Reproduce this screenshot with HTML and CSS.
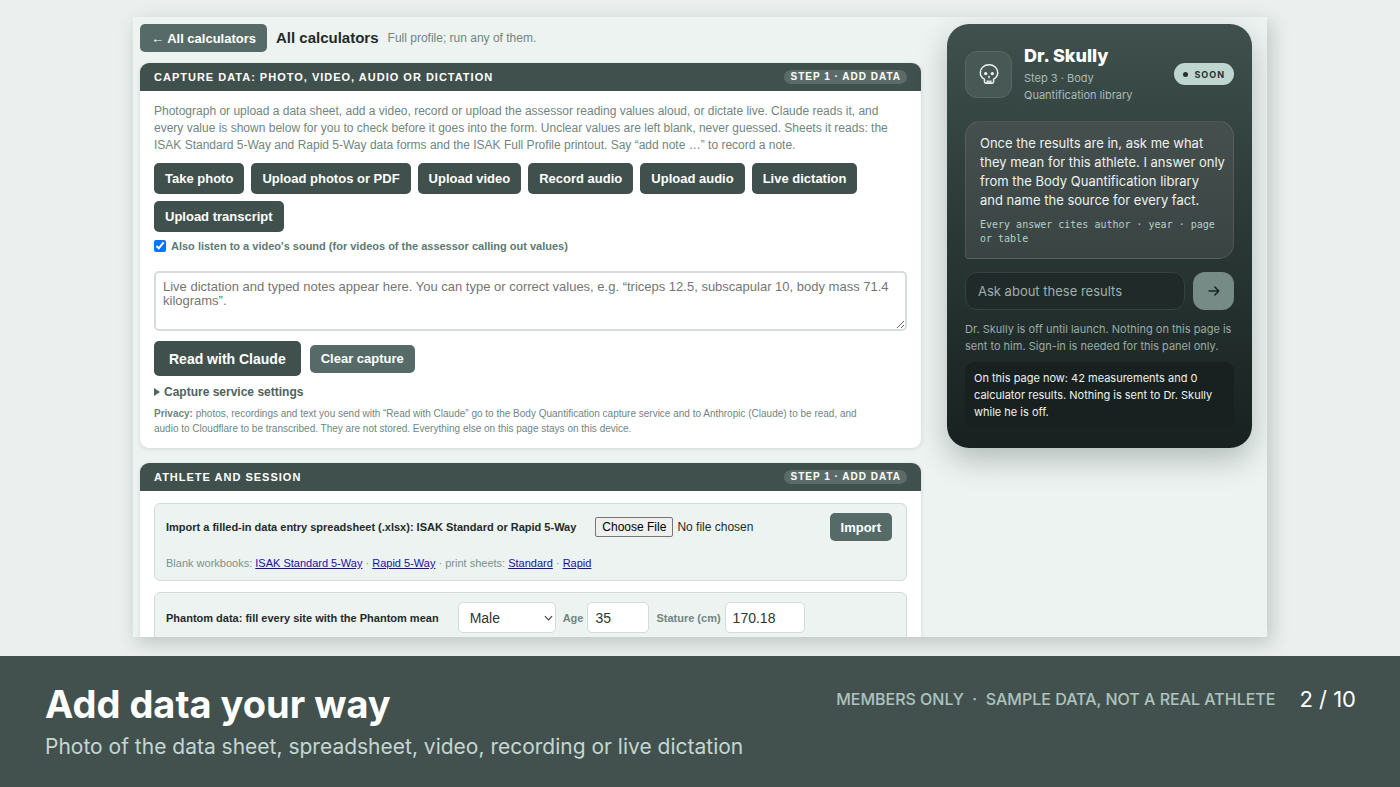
FILE: index.html
```html
<!DOCTYPE html>
<html lang="en">
<head>
  <meta charset="UTF-8">
  <title>Add data your way</title>
  <meta name="viewport" content="width=device-width, initial-scale=1.0">
  <link rel="stylesheet" href="styles.css">
</head>
<body>
  <div class="stage">
    <div class="shot">
      <main class="main">
        <div class="topbar">
          <button type="button" class="btn btn-soft">← All calculators</button>
          <h1>All calculators</h1>
          <span class="topbar-note">Full profile; run any of them.</span>
        </div>

        <section class="card">
          <div class="card-head">
            <h2>Capture data: photo, video, audio or dictation</h2>
            <span class="step">Step 1 · Add data</span>
          </div>
          <div class="card-body">
            <p class="intro">Photograph or upload a data sheet, add a video, record or upload the assessor reading values aloud, or dictate live. Claude reads it, and every value is shown below for you to check before it goes into the form. Unclear values are left blank, never guessed. Sheets it reads: the ISAK Standard 5-Way and Rapid 5-Way data forms and the ISAK Full Profile printout. Say “add note …” to record a note.</p>
            <div class="btn-row">
              <button type="button" class="btn">Take photo</button>
              <button type="button" class="btn">Upload photos or PDF</button>
              <button type="button" class="btn">Upload video</button>
              <button type="button" class="btn">Record audio</button>
              <button type="button" class="btn">Upload audio</button>
              <button type="button" class="btn">Live dictation</button>
              <button type="button" class="btn">Upload transcript</button>
            </div>
            <label class="check"><input type="checkbox" checked> Also listen to a video's sound (for videos of the assessor calling out values)</label>
            <textarea class="notes" aria-label="Dictation and notes" placeholder="Live dictation and typed notes appear here. You can type or correct values, e.g. “triceps 12.5, subscapular 10, body mass 71.4 kilograms”."></textarea>
            <div class="actions">
              <button type="button" class="btn btn-big">Read with Claude</button>
              <button type="button" class="btn btn-soft">Clear capture</button>
            </div>
            <details class="settings">
              <summary>Capture service settings</summary>
            </details>
            <p class="privacy"><b>Privacy:</b> photos, recordings and text you send with “Read with Claude” go to the Body Quantification capture service and to Anthropic (Claude) to be read, and<br>audio to Cloudflare to be transcribed. They are not stored. Everything else on this page stays on this device.</p>
          </div>
        </section>

        <section class="card">
          <div class="card-head">
            <h2>Athlete and session</h2>
            <span class="step">Step 1 · Add data</span>
          </div>
          <div class="card-body">
            <div class="box">
              <div class="box-row">
                <label class="box-title" for="xlsx">Import a filled-in data entry spreadsheet (.xlsx): ISAK Standard or Rapid 5-Way</label>
                <input type="file" id="xlsx" class="file">
                <button type="button" class="btn btn-soft">Import</button>
              </div>
              <p class="links">Blank workbooks: <a href="#">ISAK Standard 5-Way</a> · <a href="#">Rapid 5-Way</a> · print sheets: <a href="#">Standard</a> · <a href="#">Rapid</a></p>
            </div>
            <div class="box">
              <div class="box-row">
                <label class="box-title" for="sex">Phantom data: fill every site with the Phantom mean</label>
                <span class="select">
                  <select id="sex">
                    <option>Male</option>
                    <option>Female</option>
                  </select>
                  <svg viewBox="0 0 10 6" aria-hidden="true"><path d="M1 1l4 4 4-4"/></svg>
                </span>
                <label class="field">Age <input type="text" class="age" value="35"></label>
                <label class="field">Stature (cm) <input type="text" class="stature" value="170.18"></label>
              </div>
            </div>
          </div>
        </section>
      </main>

      <aside class="skully">
        <div class="skully-head">
          <div class="avatar">
            <svg viewBox="0 0 24 24" aria-hidden="true">
              <path d="M7 17.500C4.500 16.200 2.500 13.800 2.500 10.500 2.500 5.500 6.700 2 12 2s9.500 3.500 9.500 8.500c0 3.300-2 5.700-4.500 7v3c0 .9-.6 1.500-1.500 1.500h-7C7.600 22 7 21.400 7 20.500z"/>
              <path d="M10 19.500V22M12 19.500V22M14 19.500V22M12 14.500v1.500"/>
              <circle class="eye" cx="8.400" cy="11.500" r="1.800"/>
              <circle class="eye" cx="15.600" cy="11.500" r="1.800"/>
            </svg>
          </div>
          <div class="who">
            <h2>Dr. Skully</h2>
            <p>Step 3 · Body Quantification library</p>
          </div>
          <span class="soon">Soon</span>
        </div>
        <div class="bubble">
          <p>Once the results are in, ask me what<br>they mean for this athlete. I answer only<br>from the Body Quantification library<br>and name the source for every fact.</p>
          <p class="cite">Every answer cites author · year · page<br>or table</p>
        </div>
        <div class="ask">
          <input type="text" placeholder="Ask about these results" aria-label="Ask about these results">
          <button type="button" aria-label="Send">
            <svg viewBox="0 0 16 16" aria-hidden="true"><path d="M2.500 8h11M9 3.500L13.500 8 9 12.500"/></svg>
          </button>
        </div>
        <p class="off-note">Dr. Skully is off until launch. Nothing on this page is sent to him. Sign-in is needed for this panel only.</p>
        <p class="now">On this page now: 42 measurements and 0 calculator results. Nothing is sent to Dr. Skully while he is off.</p>
      </aside>
    </div>
  </div>

  <footer class="caption">
    <div>
      <p class="caption-title">Add data your way</p>
      <p class="caption-sub">Photo of the data sheet, spreadsheet, video, recording or live dictation</p>
    </div>
    <div class="caption-meta">
      <span class="members">MEMBERS ONLY &nbsp;·&nbsp; SAMPLE DATA, NOT A REAL ATHLETE</span>
      <span class="count">2 / 10</span>
    </div>
  </footer>
</body>
</html>
```
FILE: styles.css
```css
* {
  box-sizing: border-box;
}
body {
  margin: 0;
  height: 100vh;
  display: flex;
  flex-direction: column;
  background: #ebf0ee;
  font-family: "Liberation Sans", Arial, sans-serif;
  color: #1f2b29;
}
h1, h2, p {
  margin: 0;
}
button, input, select, textarea {
  font-family: inherit;
}

/* framed app */
.stage {
  flex: 1;
  min-height: 0;
  display: flex;
  justify-content: center;
  padding: 17px 0 19px;
  overflow: hidden;
}
.shot {
  width: 81%;
  display: flex;
  align-items: flex-start;
  gap: 26px;
  padding: 7px 15px 0 7px;
  background: #edf3f1;
  box-shadow: 4px 6px 18px rgba(40, 60, 55, 0.24);
  overflow: hidden;
}
.main {
  flex: 1;
  min-width: 0;
}
.topbar {
  display: flex;
  align-items: center;
  gap: 9px;
  margin-bottom: 11px;
}
.topbar h1 {
  font-size: 15px;
  line-height: 20px;
}
.topbar-note {
  font-size: 12px;
  color: #6f8681;
}

.btn {
  height: 31px;
  padding: 0 11px;
  border: 0;
  border-radius: 5px;
  background: #3f504d;
  color: #fff;
  font-size: 13px;
  font-weight: bold;
  white-space: nowrap;
  cursor: pointer;
}
.btn-soft {
  height: 28px;
  background: #566b67;
}
.btn-big {
  height: 35px;
  padding: 0 15px;
  font-size: 14px;
}

.card {
  margin-bottom: 15px;
  border-radius: 9px;
  background: #fff;
  box-shadow: 0 1px 4px rgba(40, 60, 55, 0.15);
  overflow: hidden;
}
.card-head {
  display: flex;
  align-items: center;
  justify-content: space-between;
  height: 28px;
  padding: 0 14px;
  background: #3f504d;
  color: #fff;
  text-transform: uppercase;
}
.card-head h2 {
  font-size: 11px;
  letter-spacing: 1px;
}
.step {
  padding: 0 6px;
  border-radius: 7px;
  background: #5b6b68;
  font-size: 10px;
  line-height: 14px;
  font-weight: bold;
  letter-spacing: 1px;
}
.card-body {
  padding: 12px 14px;
}
.intro {
  font-size: 12px;
  line-height: 17px;
  color: #6f8681;
}
.btn-row {
  display: flex;
  flex-wrap: wrap;
  gap: 7px;
  margin: 9px 0 7px;
}
.check {
  display: flex;
  align-items: center;
  gap: 5px;
  font-size: 11px;
  line-height: 14px;
  font-weight: bold;
  color: #5c7a73;
}
.check input {
  width: 12px;
  height: 12px;
  margin: 0;
}
.notes {
  display: block;
  width: 100%;
  height: 60px;
  margin: 18px 0 10px;
  padding: 7px;
  border: 2px solid #d5dcda;
  border-radius: 5px;
  font-size: 13px;
  line-height: 14px;
}
.notes::placeholder {
  color: #757575;
}
.actions {
  display: flex;
  align-items: center;
  gap: 9px;
}
.settings {
  margin: 8px 0 6px;
  font-size: 12px;
  line-height: 16px;
  font-weight: bold;
  color: #4f625e;
}
.settings summary {
  display: flex;
  align-items: center;
  gap: 4px;
}
.settings summary::before {
  content: "";
  border: 4px solid transparent;
  border-left: 6px solid #4f625e;
  border-right: 0;
}
.privacy {
  font-size: 10px;
  line-height: 15px;
  color: #6f8681;
}

.box {
  padding: 9px 14px 9px 11px;
  border: 1px solid #d3dcd9;
  border-radius: 6px;
  background: #edf3f1;
}
.box + .box {
  margin-top: 11px;
}
.box-row {
  display: flex;
  align-items: center;
  gap: 7px;
}
.box-row .btn {
  margin-left: auto;
}
.box-title {
  margin-right: 12px;
  font-size: 11px;
  font-weight: bold;
  white-space: nowrap;
}
.file {
  width: 190px;
  font-size: 12px;
}
.file::file-selector-button {
  height: 20px;
  padding: 0 6px;
  border: 1px solid #767676;
  border-radius: 2px;
  background: #efefef;
  font: inherit;
}
.links {
  margin-top: 14px;
  font-size: 11px;
  line-height: 16px;
  color: #7a918b;
}
.links a {
  color: #1a0dab;
}
.select {
  position: relative;
}
.select svg {
  position: absolute;
  right: 3px;
  top: 13px;
  width: 9px;
  height: 6px;
  fill: none;
  stroke: #444;
  stroke-width: 1.3;
  pointer-events: none;
}
.box select, .box-row input[type=text] {
  height: 31px;
  padding: 0 7px;
  border: 1px solid #d3dcd9;
  border-radius: 5px;
  background: #fff;
  color: #2b3634;
  font-size: 14px;
}
.box select {
  display: block;
  width: 98px;
  padding: 0 11px;
  appearance: none;
}
.field {
  display: flex;
  align-items: center;
  gap: 4px;
  font-size: 11px;
  font-weight: bold;
  color: #6f8681;
}
.age {
  width: 62px;
}
.stature {
  width: 80px;
}

/* assistant panel */
.skully {
  flex: none;
  width: 305px;
  padding: 20px 18px 19px;
  border-radius: 22px;
  background: linear-gradient(#3f504d, #2a3835 50%, #18211f);
  box-shadow: 0 12px 30px rgba(30, 45, 42, 0.28);
  color: #edf3f1;
  font-family: Inter, "Liberation Sans", sans-serif;
}
.skully-head {
  display: flex;
  align-items: center;
  gap: 12px;
  margin-bottom: 17px;
}
.avatar {
  display: flex;
  align-items: center;
  justify-content: center;
  width: 47px;
  height: 47px;
  border: 1px solid #566865;
  border-radius: 12px;
  background: #475855;
}
.avatar svg {
  width: 22px;
  height: 22px;
  fill: none;
  stroke: #edf3f1;
  stroke-width: 1.6;
  stroke-linecap: round;
  stroke-linejoin: round;
}
.avatar .eye {
  fill: #edf3f1;
  stroke: none;
}
.who {
  flex: 1;
}
.who h2 {
  margin-bottom: 2px;
  font-size: 18px;
  line-height: 24px;
  font-weight: 800;
  color: #fff;
}
.who p {
  font-size: 11px;
  line-height: 17px;
  color: #a9bbb6;
}
.soon {
  display: flex;
  align-items: center;
  gap: 6px;
  height: 22px;
  padding: 0 9px;
  border-radius: 11px;
  background: #bfd5cf;
  color: #24312f;
  font-size: 9px;
  font-weight: bold;
  letter-spacing: 1px;
  text-transform: uppercase;
}
.soon::before {
  content: "";
  width: 5px;
  height: 5px;
  border-radius: 50%;
  background: #24312f;
}
.bubble {
  padding: 12px 6px 12px 14px;
  border: 1px solid rgba(255, 255, 255, 0.1);
  border-radius: 15px 15px 15px 4px;
  background: linear-gradient(#454f4d, #3a4442);
  font-size: 13px;
  line-height: 19px;
}
.bubble .cite {
  margin-top: 8px;
  font-family: "DejaVu Sans Mono", monospace;
  font-size: 10px;
  line-height: 14px;
  color: #b4d0c8;
}
.ask {
  display: flex;
  gap: 8px;
  margin: 13px 0 11px;
}
.ask input {
  flex: 1;
  min-width: 0;
  height: 38px;
  padding: 0 12px;
  border: 1px solid #35433f;
  border-radius: 12px;
  background: #202b29;
  color: #edf3f1;
  font-size: 13px;
}
.ask input::placeholder {
  color: #9fafab;
}
.ask button {
  display: flex;
  align-items: center;
  justify-content: center;
  width: 41px;
  padding: 0;
  border: 0;
  border-radius: 12px;
  background: #768b85;
}
.ask button svg {
  width: 14px;
  height: 14px;
  fill: none;
  stroke: #1b2523;
  stroke-width: 1.8;
  stroke-linecap: round;
  stroke-linejoin: round;
}
.off-note {
  font-size: 11px;
  line-height: 17px;
  color: #9aaba6;
}
.now {
  margin-top: 7px;
  padding: 8px 9px;
  border-radius: 9px;
  background: #18211f;
  font-size: 11px;
  line-height: 17px;
}

/* caption strip */
.caption {
  display: flex;
  justify-content: space-between;
  min-height: 131px;
  padding: 24px 44px 0 45px;
  background: #42514e;
  font-family: Inter, "Liberation Sans", sans-serif;
}
.caption-title {
  font-size: 38px;
  line-height: 48px;
  font-weight: bold;
  color: #fff;
}
.caption-sub {
  margin-top: 5px;
  font-size: 21px;
  line-height: 28px;
  color: #c5d6d1;
}
.caption-meta {
  display: flex;
  gap: 24px;
  line-height: 38px;
}
.members {
  font-size: 16px;
  font-weight: 500;
  color: #afc3be;
}
.count {
  font-size: 22px;
  color: #fff;
}
```
